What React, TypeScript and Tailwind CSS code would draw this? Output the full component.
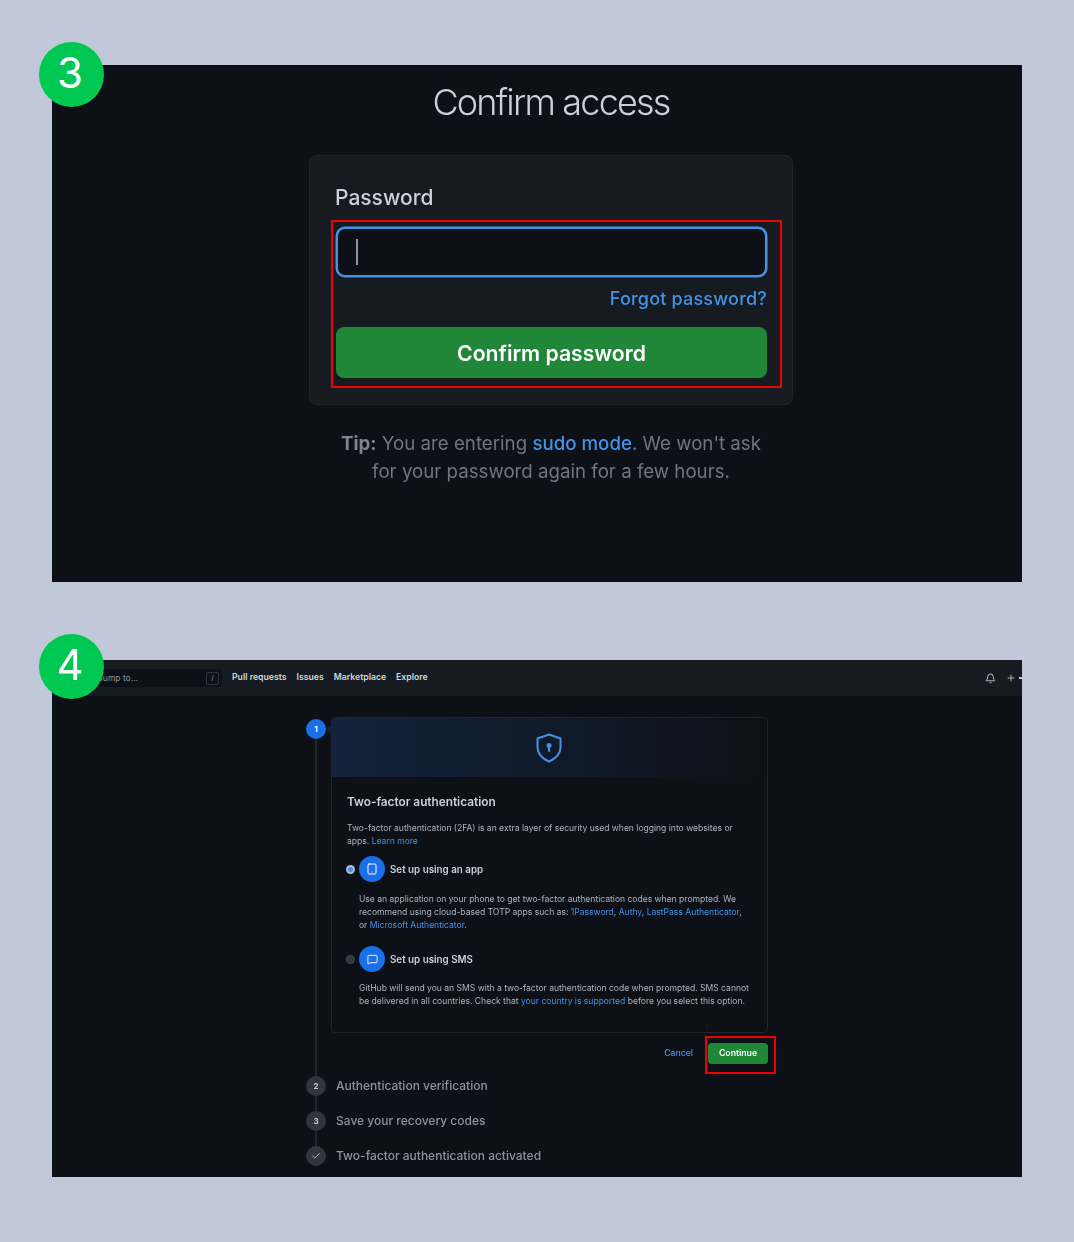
import { Bell, Check, MessageSquare, Plus, Tablet } from 'lucide-react';

function StepBadge({ label, top }: { label: string; top: string }) {
  return (
    <div className={`absolute -left-[13px] z-10 flex h-[65px] w-[65px] items-center justify-center rounded-full bg-[#00c853] pb-[3px] pr-[3px] text-[42px] leading-none text-white ${top}`}>
      {label}
    </div>
  );
}

function ConfirmAccess() {
  return (
    <div className="relative ml-[52px] mt-[65px] h-[517px] w-[970px] shrink-0 bg-[#0d1117]">
      <StepBadge label="3" top="-top-[23px]" />
      <div className="ml-[257px] w-[484px] pt-[13px] blur-[0.3px]">
        <h1 className="text-center text-[36px] font-light leading-[48px] tracking-[-1.8px] text-[#c9d1d9]">
          Confirm access
        </h1>
        <div className="mt-[29px] h-[250px] rounded-lg border border-[#21262d] bg-[#161b22] pl-[26px] pr-[25px] pt-[28px]">
          <div className="-ml-px text-[21px] font-medium leading-[28px] text-[#c9d1d9]">Password</div>
          <div className="mt-[15px] flex h-[50px] items-center rounded-[9px] border-2 border-[#4493e6] bg-[#0d1117] pl-[18px] shadow-[0_0_0_0.5px_#4493e6]">
            <div className="h-[26px] w-[2px] bg-[#8b949e]" />
          </div>
          <div className="mt-[10px] text-right text-[18px] font-medium leading-[24px] tracking-[0.2px] text-[#4493e6]">Forgot password?</div>
          <button className="mt-[16px] h-[51px] w-full rounded-lg bg-[#1f8737] pt-[2px] text-[21.2px] font-semibold text-white">
            Confirm password
          </button>
        </div>
        <p className="mt-[25px] text-center text-[18.7px] leading-[28px] text-[#6e7681]">
          <span className="font-bold text-[#7d8590]">Tip:</span> You are entering{' '}
          <span className="font-medium text-[#4493e6]">sudo mode</span>. We won't ask
          <br />
          for your password again for a few hours.
        </p>
      </div>
      {/* annotation */}
      <div className="absolute left-[279px] top-[155px] h-[168px] w-[451px] border-2 border-[#ee0000]" />
    </div>
  );
}

function TopBar() {
  return (
    <div className="flex h-[36px] items-center bg-[#161b22] pl-[43px]">
      <div className="flex h-[18px] w-[127px] items-center justify-between rounded bg-[#0d1117] pl-[3px] pr-[3px]">
        <span className="text-[8.5px] text-[#8b949e]">Jump to...</span>
        <span className="flex h-[13px] w-[13px] items-center justify-center rounded-[2px] border border-[#30363d] text-[7px] text-[#8b949e]">
          /
        </span>
      </div>
      <nav className="ml-[10px] flex gap-[10px] text-[8.7px] font-semibold text-[#d0d7de]">
        <span>Pull requests</span>
        <span>Issues</span>
        <span>Marketplace</span>
        <span>Explore</span>
      </nav>
      <div className="ml-auto flex items-center text-[#c9d1d9]">
        <Bell className="h-[11px] w-[11px]" />
        <Plus className="ml-[10px] h-[10px] w-[10px]" />
        <div className="ml-[3px] h-[2px] w-[3px] bg-[#c9d1d9]" />
      </div>
    </div>
  );
}

function ShieldIcon() {
  return (
    <svg width="26" height="30" viewBox="0 0 26 30" fill="none">
      <path
        d="M13 1.5 24.5 5.5V14c0 7-4.5 11.5-11.5 14.5C6 25.500 1.500 21 1.500 14V5.500Z"
        stroke="#4493e6"
        strokeWidth="2"
        strokeLinejoin="round"
      />
      <circle cx="13" cy="12.500" r="2.500" fill="#4493e6" />
      <rect x="12" y="13" width="2" height="6" rx="1" fill="#4493e6" />
    </svg>
  );
}

function Radio({ checked }: { checked: boolean }) {
  return checked ? (
    <div className="-ml-px flex h-[9px] w-[9px] items-center justify-center rounded-full bg-[#adbad0]">
      <div className="h-[5px] w-[5px] rounded-full bg-[#4d8fe0]" />
    </div>
  ) : (
    <div className="-ml-px h-[9px] w-[9px] rounded-full border border-[#484f58] bg-[#30363d]" />
  );
}

function OptionHead({ checked, title, icon }: { checked: boolean; title: string; icon: React.ReactNode }) {
  return (
    <div className="flex items-center">
      <Radio checked={checked} />
      <div className="ml-[4px] flex h-[26px] w-[26px] items-center justify-center rounded-full bg-[#1a6fe8] text-white">
        {icon}
      </div>
      <span className="ml-[5px] text-[9.8px] font-semibold text-[#c9d1d9]">{title}</span>
    </div>
  );
}

function TwoFactorCard() {
  return (
    <div className="relative ml-[25px] h-[316px] w-[437px] rounded border border-[#21262d]">
      <div className="absolute -left-[4px] top-[8px] h-[7px] w-[7px] rotate-45 bg-[#14233a]" />
      <div className="flex h-[59px] items-center justify-center rounded-t bg-gradient-to-r from-[#14233a] via-[#101a2a] to-[#0d1117] pr-[2px]">
        <ShieldIcon />
      </div>
      <div className="whitespace-nowrap px-[15px] pt-[17px] text-[8.55px] leading-[13px] text-[#adb5bd]">
        <h2 className="text-[11.8px] font-semibold leading-[16px] text-[#c9d1d9]">Two-factor authentication</h2>
        <p className="mt-[12px]">
          Two-factor authentication (2FA) is an extra layer of security used when logging into websites or
          <br />
          apps. <span className="text-[#4493e6]">Learn more</span>
        </p>
        <div className="mt-[8px]">
          <OptionHead checked title="Set up using an app" icon={<Tablet className="h-[12px] w-[12px]" />} />
        </div>
        <p className="ml-[12px] mt-[11px]">
          Use an application on your phone to get two-factor authentication codes when prompted. We
          <br />
          recommend using cloud-based TOTP apps such as: <span className="text-[#4493e6]">1Password</span>,{' '}
          <span className="text-[#4493e6]">Authy</span>, <span className="text-[#4493e6]">LastPass Authenticator</span>,
          <br />
          or <span className="text-[#4493e6]">Microsoft Authenticator</span>.
        </p>
        <div className="mt-[14px]">
          <OptionHead checked={false} title="Set up using SMS" icon={<MessageSquare className="h-[11px] w-[11px]" />} />
        </div>
        <p className="ml-[12px] mt-[10px]">
          GitHub will send you an SMS with a two-factor authentication code when prompted. SMS cannot
          <br />
          be delivered in all countries. Check that <span className="text-[#4493e6]">your country is supported</span> before you select this option.
        </p>
      </div>
    </div>
  );
}

function LaterStep({ mark, label, top }: { mark: React.ReactNode; label: string; top: string }) {
  return (
    <div className={`flex h-[20px] items-center ${top}`}>
      <div className="z-10 flex h-[20px] w-[20px] items-center justify-center rounded-full bg-[#30363d] text-[8px] font-bold text-[#c9d1d9]">
        {mark}
      </div>
      <span className="ml-[10px] text-[12px] font-medium text-[#8b949e]">{label}</span>
    </div>
  );
}

function TwoFactorSetup() {
  return (
    <div className="relative ml-[52px] mt-[78px] h-[517px] w-[970px] shrink-0 bg-[#0d1117]">
      <StepBadge label="4" top="-top-[26px]" />
      <div className="h-full overflow-hidden blur-[0.4px]">
        <TopBar />
        <div className="relative ml-[254px] w-[480px] pt-[21px]">
          {/* timeline line */}
          <div className="absolute bottom-[10px] left-[9px] top-[30px] w-[2px] bg-[#21262d]" />
          <div className="absolute left-0 top-[23px] z-10 flex h-[20px] w-[20px] items-center justify-center rounded-full bg-[#1a6fe8] text-[8px] font-bold text-white">
            1
          </div>
          <TwoFactorCard />
          <div className="ml-[25px] mt-[10px] flex h-[21px] w-[437px] items-center justify-end text-[8.7px] font-medium">
            <span className="mr-[15px] text-[#4493e6]">Cancel</span>
            <button className="h-[21px] w-[60px] rounded bg-[#1f8737] text-[8.7px] font-semibold text-white">Continue</button>
          </div>
          <LaterStep mark="2" label="Authentication verification" top="mt-[12px]" />
          <LaterStep mark="3" label="Save your recovery codes" top="mt-[15px]" />
          <LaterStep mark={<Check className="h-[10px] w-[10px]" />} label="Two-factor authentication activated" top="mt-[15px]" />
        </div>
      </div>
      {/* annotation */}
      <div className="absolute left-[653px] top-[376px] h-[38px] w-[71px] border-2 border-[#ee0000]" />
    </div>
  );
}

export default function App() {
  return (
    <div className="flex h-[1242px] w-[1074px] flex-col overflow-hidden bg-[#c1c8d9] font-['Inter',sans-serif]">
      <ConfirmAccess />
      <TwoFactorSetup />
    </div>
  );
}
